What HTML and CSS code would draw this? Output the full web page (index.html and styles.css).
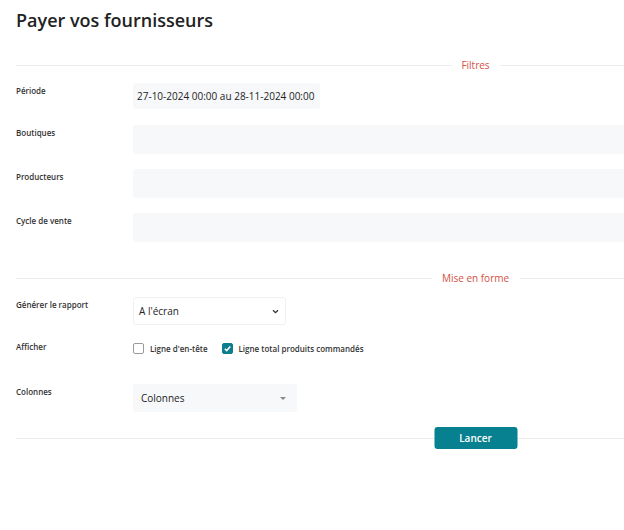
FILE: index.html
```html
<!DOCTYPE html>
<html lang="fr">
<head>
<meta charset="utf-8">
<title>Payer vos fournisseurs</title>
<link rel="stylesheet" href="styles.css">
</head>
<body>
<div class="page">
  <h1 class="title">Payer vos fournisseurs</h1>

  <div class="sep sep-first"><span class="line"></span><span class="sep-label">Filtres</span></div>

  <div class="row row-period">
    <div class="label">Période</div>
    <div class="field field-period">27-10-2024 00:00 au 28-11-2024 00:00</div>
  </div>
  <div class="row row-multi">
    <div class="label">Boutiques</div>
    <div class="field field-multi"></div>
  </div>
  <div class="row row-multi row-gap15">
    <div class="label">Producteurs</div>
    <div class="field field-multi"></div>
  </div>
  <div class="row row-multi row-gap15">
    <div class="label">Cycle de vente</div>
    <div class="field field-multi"></div>
  </div>

  <div class="sep sep-second"><span class="line"></span><span class="sep-label">Mise en forme</span></div>

  <div class="row row-report">
    <div class="label">Générer le rapport</div>
    <div class="select">
      <span>A l'écran</span>
      <svg class="chev" width="7" height="5" viewBox="0 0 7 5"><polyline points="1,1.2 3.5,3.7 6,1.2" fill="none" stroke="#333" stroke-width="1.3"/></svg>
    </div>
  </div>

  <div class="row row-show">
    <div class="label label-show">Afficher</div>
    <div class="checks">
      <label class="check"><span class="box"></span>Ligne d'en-tête</label>
      <label class="check"><span class="box box-on"><svg width="9" height="9" viewBox="0 0 9 9"><polyline points="1.8,4.8 3.7,6.6 7.3,2.4" fill="none" stroke="#fff" stroke-width="1.5"/></svg></span>Ligne total produits commandés</label>
    </div>
  </div>

  <div class="row row-cols">
    <div class="label">Colonnes</div>
    <div class="dropdown">
      <span>Colonnes</span>
      <span class="caret"></span>
    </div>
  </div>

  <div class="sep sep-action"><span class="line"></span><button class="btn">Lancer</button></div>
</div>
</body>
</html>
```

FILE: styles.css
```css
html, body {
  margin: 0;
  padding: 0;
  background: #ffffff;
}

body {
  font-family: "Open Sans", "Noto Sans", sans-serif;
  color: #333;
}

.page {
  padding: 0 0 0 16px;
}

.title {
  margin: 0;
  padding-top: 8px;
  font-size: 18px;
  line-height: 24px;
  font-weight: 600;
  color: #222;
}

.sep {
  position: relative;
  height: 14px;
  display: flex;
  align-items: center;
}

.sep .line {
  flex: 1;
  height: 1px;
  background: #ececec;
}

.sep-label {
  position: absolute;
  left: 459.5px;
  top: 0;
  transform: translateX(-50%);
  padding: 0 10px;
  background: #fff;
  font-size: 10px;
  line-height: 14px;
  color: #d4503f;
  white-space: nowrap;
}

.sep-first { margin-top: 26px; }
.sep-second { margin-top: 29px; }
.sep-action { margin-top: 15px; height: 22px; }

.row {
  display: grid;
  grid-template-columns: 117px 1fr;
  align-items: start;
}

.label {
  font-size: 8px;
  line-height: 12px;
  font-weight: 600;
  color: #333;
  padding-top: 2px;
}

.field {
  background: #f7f8fa;
  border-radius: 3px 0 0 3px;
  font-size: 10px;
  color: #222;
}

.row-period { margin-top: 11px; }
.field-period {
  width: 187px;
  height: 26px;
  line-height: 26px;
  padding-left: 4px;
  box-sizing: border-box;
  border-radius: 3px;
}

.row-multi { margin-top: 16px; }
.row-gap15 { margin-top: 15px; }
.field-multi { height: 29px; }

.row-report { margin-top: 12px; }
.select {
  width: 153px;
  height: 28px;
  box-sizing: border-box;
  border: 1px solid #f0f0f0;
  border-radius: 3px;
  display: flex;
  align-items: center;
  justify-content: space-between;
  padding: 0 6px 0 5px;
  font-size: 10px;
  color: #222;
}

.row-show { margin-top: 16px; }
.label-show { padding-top: 0; }
.checks {
  display: flex;
  align-items: center;
  gap: 14px;
  height: 15px;
}
.check {
  display: flex;
  align-items: center;
  gap: 6px;
  font-size: 8px;
  font-weight: 600;
  color: #333;
}
.box {
  width: 11px;
  height: 11px;
  box-sizing: border-box;
  border: 1px solid #9a9a9a;
  border-radius: 2px;
  display: flex;
  align-items: center;
  justify-content: center;
}
.box-on {
  background: #0b7d8c;
  border-color: #0b7d8c;
}

.row-cols { margin-top: 28px; }
.dropdown {
  width: 164px;
  height: 28px;
  box-sizing: border-box;
  background: #f7f8fa;
  border-radius: 3px;
  display: flex;
  align-items: center;
  justify-content: space-between;
  padding: 0 11px 0 8px;
  font-size: 10px;
  color: #222;
}
.caret {
  width: 0;
  height: 0;
  border-left: 3.5px solid transparent;
  border-right: 3.5px solid transparent;
  border-top: 3.5px solid #888;
}

.btn {
  position: absolute;
  left: 459.5px;
  top: 0;
  transform: translateX(-50%);
  width: 83px;
  height: 22px;
  box-sizing: border-box;
  border: none;
  border-radius: 3px;
  background: #07808f;
  color: #fff;
  font-family: "Open Sans", "Noto Sans", sans-serif;
  font-size: 10px;
  font-weight: 600;
  line-height: 22px;
  padding: 0;
  margin: 0;
}
```
